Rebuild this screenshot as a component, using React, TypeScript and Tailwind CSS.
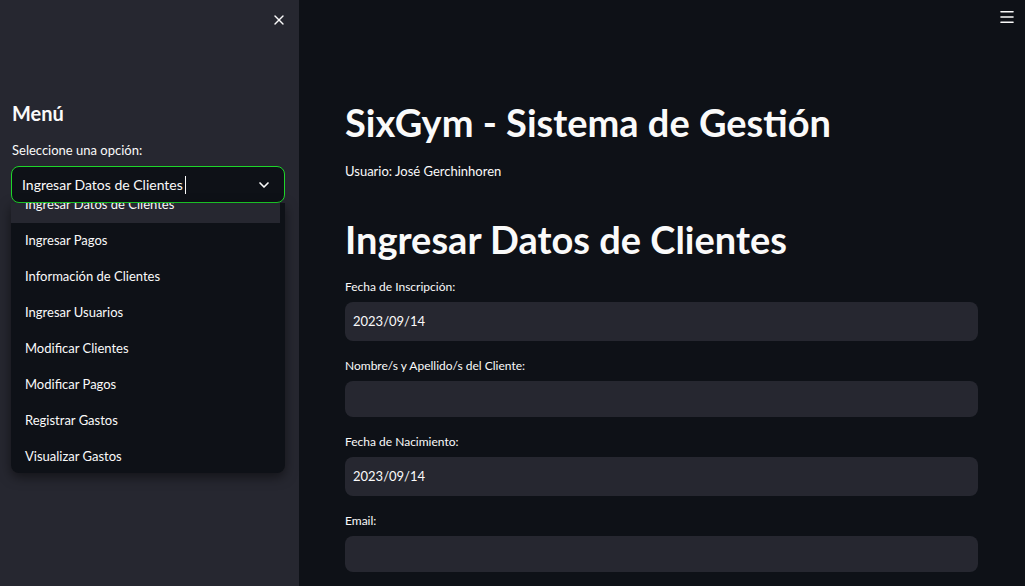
import { X, ChevronDown, Menu } from 'lucide-react';

const options = [
  'Ingresar Datos de Clientes',
  'Ingresar Pagos',
  'Información de Clientes',
  'Ingresar Usuarios',
  'Modificar Clientes',
  'Modificar Pagos',
  'Registrar Gastos',
  'Visualizar Gastos',
];

const fields = [
  { label: 'Fecha de Inscripción:', value: '2023/09/14', h: 'h-[39px]' },
  { label: 'Nombre/s y Apellido/s del Cliente:', value: '', h: 'h-[36px]' },
  { label: 'Fecha de Nacimiento:', value: '2023/09/14', h: 'h-[39px]' },
  { label: 'Email:', value: '', h: 'h-[36px]' },
];

function Sidebar() {
  return (
    <aside className="w-[299px] shrink-0 h-full bg-[#262730] flex flex-col">
      <div className="h-[38px] flex justify-end items-center pr-[12px] pt-[1px]">
        <X className="w-[16px] h-[16px] text-[#fafafa]" strokeWidth={2} />
      </div>
      <div className="px-[12px] pt-[61px]">
        <h2 className="text-[20px] font-bold text-[#fafafa] leading-[28px]">Menú</h2>
        <p className="mt-[14px] text-[13px] text-[#fafafa] leading-[18px]">Seleccione una opción:</p>
        <div className="mt-[7px] w-[274px] -ml-[1px]">
          <div className="h-[37px] rounded-[8px] border border-[#1ed62a] bg-[#0e1117] flex items-center pl-[10px] pr-[12px]">
            <span className="text-[14px] text-[#fafafa] leading-[20px]">Ingresar Datos de Clientes</span>
            <span className="ml-[2px] w-[1px] h-[18px] bg-[#fafafa]" />
            <ChevronDown className="ml-auto w-[16px] h-[16px] text-[#fafafa]" strokeWidth={2.5} />
          </div>
          {/* list is scrolled a little, first option partly hidden */}
          <div className="h-[270px] overflow-hidden bg-[#0e1117] rounded-b-[8px] shadow-[0_4px_12px_rgba(0,0,0,0.5)]">
            <ul className="-mt-[16px]">
              {options.map((o, i) => (
                <li
                  key={o}
                  className={`h-[36px] flex items-center pl-[14px] text-[13px] text-[#fafafa] ${i === 0 ? 'bg-[#262730] mr-[5px]' : ''}`}
                >
                  {o}
                </li>
              ))}
            </ul>
          </div>
        </div>
      </div>
    </aside>
  );
}

export default function App() {
  return (
    <div
      className="w-[1025px] h-[586px] flex overflow-hidden bg-[#0e1117] text-[#fafafa]"
      style={{ fontFamily: '"Source Sans Pro", Lato, "Noto Sans", sans-serif' }}
    >
      <Sidebar />
      <main className="flex-1 flex flex-col relative">
        <div className="absolute right-[9px] top-[8px]">
          <Menu className="w-[18px] h-[18px] text-[#fafafa]" strokeWidth={2.2} />
        </div>
        <div className="pl-[46px] w-[679px] pt-[98px]">
          <h1 className="text-[38px] font-bold leading-[48px]">SixGym - Sistema de Gestión</h1>
          <p className="mt-[15px] text-[13px] leading-[20px]">Usuario: José Gerchinhoren</p>
          <h1 className="mt-[34px] text-[38px] font-bold leading-[48px]">Ingresar Datos de Clientes</h1>
          <div className="mt-[15px] flex flex-col gap-[16px]">
            {fields.map((f) => (
              <div key={f.label} className="flex flex-col">
                <label className="text-[12px] leading-[18px] mb-[6px]">{f.label}</label>
                <div className={`${f.h} rounded-[8px] bg-[#262730] flex items-center px-[8px] text-[13px]`}>
                  {f.value}
                </div>
              </div>
            ))}
          </div>
        </div>
      </main>
    </div>
  );
}
